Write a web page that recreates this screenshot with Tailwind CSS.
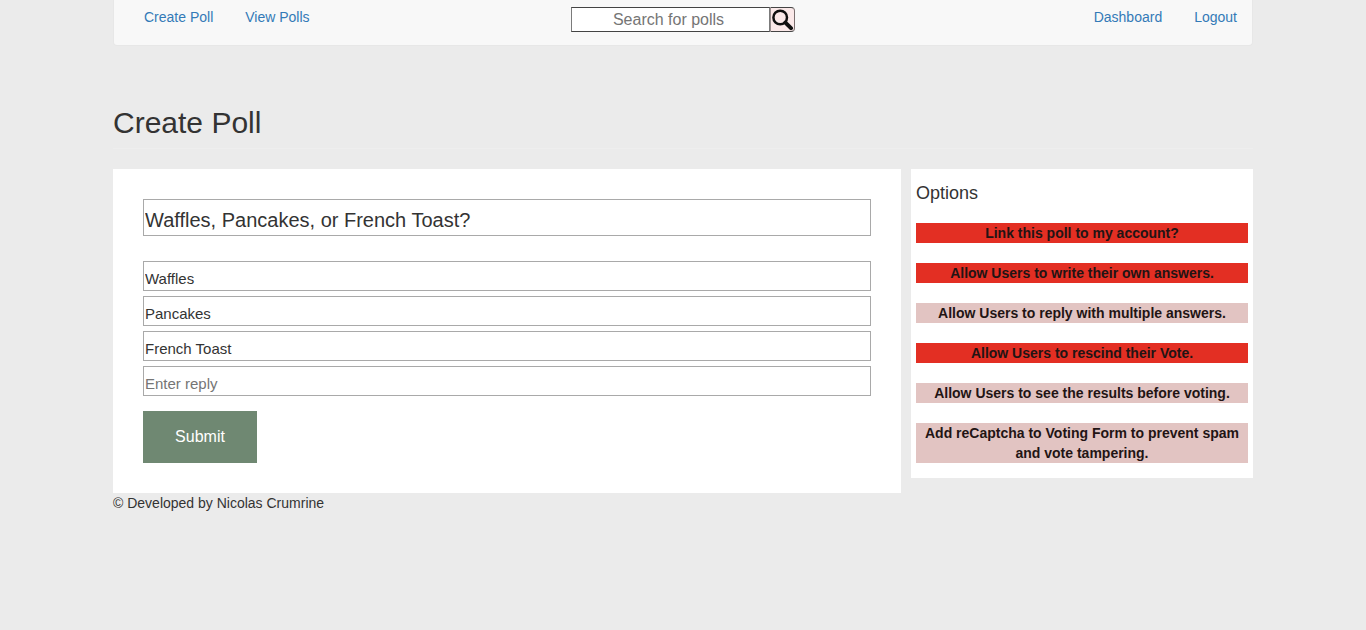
<!DOCTYPE html>
<html lang="en">
<head>
<meta charset="utf-8">
<title>Create Poll</title>
<script src="https://cdn.jsdelivr.net/npm/@tailwindcss/browser@4"></script>
</head>
<body class="h-[630px] overflow-hidden bg-[#ebebeb] font-['Liberation_Sans',Arial,sans-serif] text-sm leading-5 text-[#333]">
<div class="mx-auto w-[1140px]">
  <nav class="flex h-[46px] items-start justify-between rounded-b border border-t-0 border-[#e7e7e7] bg-[#f8f8f8] text-[#337ab7]">
    <div class="flex w-[457px] gap-8 pt-[7px] pl-[30px]"><a href="#">Create Poll</a><a href="#">View Polls</a></div>
    <form class="flex pt-[7px]">
      <input type="text" placeholder="Search for polls" class="h-[25px] w-[199px] border border-x-[#7b7b7b] border-y-[#444] bg-white pr-1 text-center text-base placeholder:text-[#757575]">
      <button type="button" aria-label="Search" class="flex h-[25px] w-[25px] items-center justify-center rounded-r border border-l-[#9a9090] border-r-[#7b6f6f] border-y-[#444] bg-[#fbe9e9]">
        <svg class="h-[23px] w-[23px]" viewBox="1 0 23 23" fill="none" stroke="#111"><circle cx="10.2" cy="9.5" r="6.8" stroke-width="2.5"/><path d="M15.4 14.6 21 20.2" stroke-width="4" stroke-linecap="round"/></svg>
      </button>
    </form>
    <div class="flex w-[457px] justify-end gap-8 pt-[7px] pr-[15px]"><a href="#">Dashboard</a><a href="#">Logout</a></div>
  </nav>
  <h1 class="mt-[60px] h-[43px] border-b border-[#eee] text-[30px] leading-[33px]">Create Poll</h1>
  <main class="mt-5 flex items-start gap-[10px]">
    <form class="h-[324px] w-[788px] bg-white p-[30px]">
      <input type="text" value="Waffles, Pancakes, or French Toast?" class="block h-[37px] w-full border border-[#a9a9a9] px-px pt-1.5 text-xl">
      <div class="mt-[25px] flex flex-col gap-[5px] text-[15px]">
        <input type="text" value="Waffles" class="h-[30px] border border-[#a9a9a9] px-px pt-[5px]">
        <input type="text" value="Pancakes" class="h-[30px] border border-[#a9a9a9] px-px pt-[5px]">
        <input type="text" value="French Toast" class="h-[30px] border border-[#a9a9a9] px-px pt-[5px]">
        <input type="text" placeholder="Enter reply" class="h-[30px] border border-[#a9a9a9] px-px pt-[5px] placeholder:text-[#757575]">
      </div>
      <button type="button" class="mt-[15px] block h-[52px] w-[114px] bg-[#6f8872] text-base text-white">Submit</button>
    </form>
    <aside class="h-[309px] w-[342px] bg-white px-[5px] pt-[14px] text-center font-bold text-[#221414]">
      <h2 class="mb-5 text-left text-lg leading-5 font-normal text-[#333]">Options</h2>
      <div class="flex flex-col gap-5">
        <div class="bg-[#e32f23]">Link this poll to my account?</div>
        <div class="bg-[#e32f23]">Allow Users to write their own answers.</div>
        <div class="bg-[#e2c4c2]">Allow Users to reply with multiple answers.</div>
        <div class="bg-[#e32f23]">Allow Users to rescind their Vote.</div>
        <div class="bg-[#e2c4c2]">Allow Users to see the results before voting.</div>
        <div class="bg-[#e2c4c2]">Add reCaptcha to Voting Form to prevent spam and vote tampering.</div>
      </div>
    </aside>
  </main>
  <footer>© Developed by Nicolas Crumrine</footer>
</div>
</body>
</html>
